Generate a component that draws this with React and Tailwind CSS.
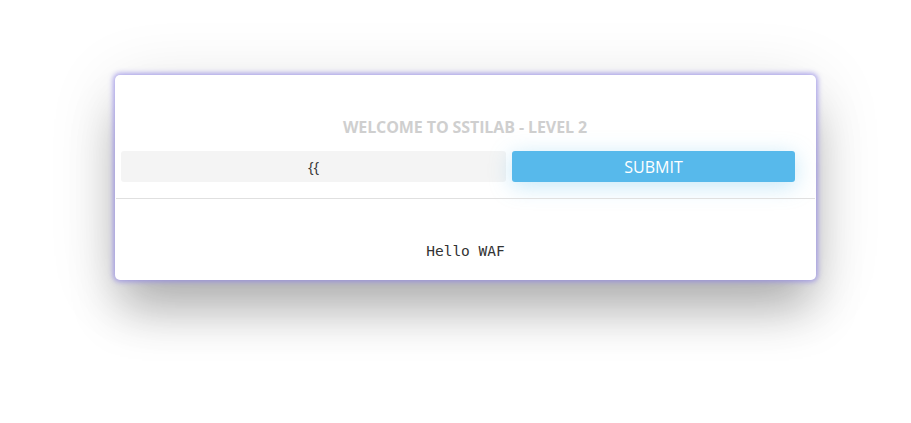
export default function App() {
  return (
    <div className="w-[911px] h-[423px] bg-white pt-[75px] pl-[115px]" style={{ fontFamily: '"Source Sans Pro", "Open Sans", sans-serif' }}>
      <div className="w-[701px] h-[205px] bg-white rounded-[5px] shadow-[0_0_5px_2px_rgba(150,140,230,0.75),0_35px_45px_-5px_rgba(0,0,0,0.26),0_10px_70px_rgba(0,0,0,0.12)] flex flex-col">
        <div className="pt-[42px] pl-[6px] pr-[21px]">
          <h1 className="h-[21px] leading-[21px] text-center text-[16px] font-bold text-[#cfcfcf] pl-[14px] tracking-[-0.1px]">WELCOME TO SSTILAB - LEVEL 2</h1>
          <div className="mt-[13px] flex gap-[6px]">
            <div className="w-[385px] h-[31px] bg-[#f4f4f4] rounded-[3px] flex items-center justify-center text-[15px] text-[#333]">{'{{'}</div>
            <button className="flex-1 h-[31px] bg-[#57b9eb] rounded-[3px] text-white text-[16px] font-medium shadow-[0_4px_22px_rgba(87,185,235,0.35)]">SUBMIT</button>
          </div>
        </div>
        <div className="mt-[16px] mx-[1px] border-t border-[#e0e0e0]" />
        <div className="flex-1 flex items-center justify-center pt-[24px]">
          <span className="text-[14.5px] text-[#333]" style={{ fontFamily: '"DejaVu Sans Mono", monospace' }}>Hello WAF</span>
        </div>
      </div>
    </div>
  );
}
